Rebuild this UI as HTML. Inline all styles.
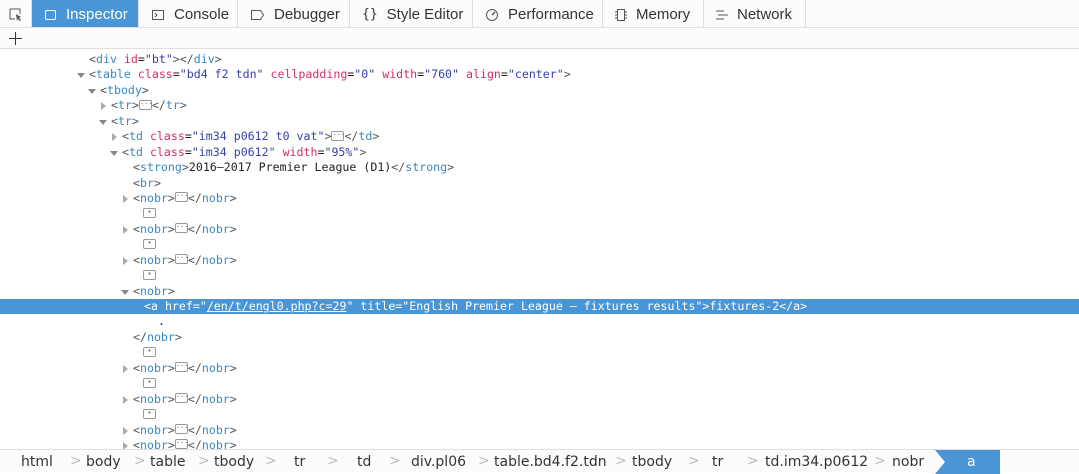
<!DOCTYPE html>
<html><head><style>
*{margin:0;padding:0;box-sizing:border-box}
body{width:1079px;height:473px;overflow:hidden;background:#fff;font-family:"Liberation Sans",sans-serif;position:relative}
.tabs{position:absolute;top:0;left:0;width:1079px;height:28px;background:#fcfcfc;border-bottom:1px solid #e0e0e0}
.tab{position:absolute;top:0;height:27px;display:flex;align-items:center;padding:2px 0 0 12px;font-size:15px;color:#333;border-right:1px solid #e0e0e0;gap:9px;white-space:nowrap;font-family:"Liberation Sans",sans-serif}
.tab svg,.tab span{flex-shrink:0}
.tab.sel{background:#4a95d6;color:#fff}
.tool{position:absolute;top:28px;left:0;width:1079px;height:21px;background:#fcfcfc;border-bottom:1px solid #e0e0e0}
.code{position:absolute;top:52px;left:0;width:1079px;font-family:"DejaVu Sans Mono","Liberation Mono",monospace;font-size:11.6px;color:#222}
.l{height:15.45px;line-height:15.45px;position:relative;white-space:pre}
.l.hi{background:#4a95d6;color:#fff}
.t{color:#3a88c0}.a{color:#d0306a}.v{color:#3640a8}.p{color:#555}
.hi .t,.hi .a,.hi .v,.hi .p{color:#fff}
.ar{position:absolute;width:0;height:0}
.dn{border-left:4px solid transparent;border-right:4px solid transparent;border-top:5px solid #888;top:6px}
.rt{border-top:4px solid transparent;border-bottom:4px solid transparent;border-left:5px solid #aaa;top:4px}
.b{display:inline-block;width:13px;height:10px;border:1px solid #999;border-radius:2px;vertical-align:middle;position:relative;top:-1px;font-size:7px;line-height:6px;text-align:center;color:#666}
.bc{position:absolute;top:449px;left:0;width:1079px;height:24px;background:#fcfcfc;border-top:1px solid #e0e0e0;font-family:"DejaVu Sans","Liberation Sans",sans-serif;font-size:14px;color:#333}
.bc span{position:absolute;top:4px}
.bc i{position:absolute;top:3px;color:#bbb;font-style:normal;font-size:14px}
</style></head><body>
<div class="tabs">
<div class="tab" style="left:0;width:32px;padding-left:9px"><svg width="13" height="13" viewBox="0 0 13 13"><path d="M1 1h10v5M1 1v10h5" fill="none" stroke="#555"/><path d="M7 6l5 3-2 1 2 2-1 1-2-2-1 2z" fill="#555"/></svg></div>
<div class="tab sel" style="left:32px;width:107px"><svg width="13" height="12"><rect x="1.5" y="1.5" width="10" height="9" rx="1.5" fill="none" stroke="#fff"/></svg>Inspector</div>
<div class="tab" style="left:139px;width:99px"><svg width="14" height="12"><rect x="1.5" y="1.5" width="11" height="9" fill="none" stroke="#555"/><path d="M4 4l2 2-2 2" fill="none" stroke="#555"/></svg>Console</div>
<div class="tab" style="left:238px;width:112px"><svg width="15" height="12"><path d="M1.5 1.5h9l3 4.5-3 4.5h-9z" fill="none" stroke="#555"/></svg>Debugger</div>
<div class="tab" style="left:350px;width:123px"><span style="font-size:13px;font-family:'DejaVu Sans Mono',monospace">{}</span>Style Editor</div>
<div class="tab" style="left:473px;width:130px"><svg width="14" height="14"><circle cx="7" cy="7" r="5.5" fill="none" stroke="#555"/><path d="M7 7l3-3" stroke="#555" stroke-width="1.5"/></svg>Performance</div>
<div class="tab" style="left:603px;width:101px"><svg width="12" height="14"><rect x="2.5" y="1.5" width="7" height="11" fill="none" stroke="#555"/><path d="M0 4h2M0 7h2M0 10h2M10 4h2M10 7h2M10 10h2" stroke="#555"/></svg>Memory</div>
<div class="tab" style="left:704px;width:102px"><svg width="12" height="12"><path d="M0 2h8M2 6h10M0 10h8" stroke="#555"/></svg>Network</div>
</div>
<div class="tool"><svg style="position:absolute;left:9px;top:4px" width="13" height="13"><path d="M6.5 0v13M0 6.5h13" stroke="#333"/></svg></div>
<div class="code">
<div class="l" style="padding-left:89px"><span class="p">&lt;</span><span class="t">div</span> <span class="a">id</span>=<span class="v">"bt"</span><span class="p">&gt;&lt;/</span><span class="t">div</span><span class="p">&gt;</span></div>
<div class="l" style="padding-left:89px"><i class="ar dn" style="left:77px"></i><span class="p">&lt;</span><span class="t">table</span> <span class="a">class</span>=<span class="v">"bd4 f2 tdn"</span> <span class="a">cellpadding</span>=<span class="v">"0"</span> <span class="a">width</span>=<span class="v">"760"</span> <span class="a">align</span>=<span class="v">"center"</span><span class="p">&gt;</span></div>
<div class="l" style="padding-left:100px"><i class="ar dn" style="left:88px"></i><span class="p">&lt;</span><span class="t">tbody</span><span class="p">&gt;</span></div>
<div class="l" style="padding-left:111px"><i class="ar rt" style="left:101px"></i><span class="p">&lt;</span><span class="t">tr</span><span class="p">&gt;</span><span class="b">···</span><span class="p">&lt;/</span><span class="t">tr</span><span class="p">&gt;</span></div>
<div class="l" style="padding-left:111px"><i class="ar dn" style="left:99px"></i><span class="p">&lt;</span><span class="t">tr</span><span class="p">&gt;</span></div>
<div class="l" style="padding-left:122px"><i class="ar rt" style="left:112px"></i><span class="p">&lt;</span><span class="t">td</span> <span class="a">class</span>=<span class="v">"im34 p0612 t0 vat"</span><span class="p">&gt;</span><span class="b">···</span><span class="p">&lt;/</span><span class="t">td</span><span class="p">&gt;</span></div>
<div class="l" style="padding-left:122px"><i class="ar dn" style="left:110px"></i><span class="p">&lt;</span><span class="t">td</span> <span class="a">class</span>=<span class="v">"im34 p0612"</span> <span class="a">width</span>=<span class="v">"95%"</span><span class="p">&gt;</span></div>
<div class="l" style="padding-left:133px"><span class="p">&lt;</span><span class="t">strong</span><span class="p">&gt;</span>2016–2017 Premier League (D1)<span class="p">&lt;/</span><span class="t">strong</span><span class="p">&gt;</span></div>
<div class="l" style="padding-left:133px"><span class="p">&lt;</span><span class="t">br</span><span class="p">&gt;</span></div>
<div class="l" style="padding-left:133px"><i class="ar rt" style="left:123px"></i><span class="p">&lt;</span><span class="t">nobr</span><span class="p">&gt;</span><span class="b">···</span><span class="p">&lt;/</span><span class="t">nobr</span><span class="p">&gt;</span></div>
<div class="l" style="padding-left:143px"><span class="b">•</span></div>
<div class="l" style="padding-left:133px"><i class="ar rt" style="left:123px"></i><span class="p">&lt;</span><span class="t">nobr</span><span class="p">&gt;</span><span class="b">···</span><span class="p">&lt;/</span><span class="t">nobr</span><span class="p">&gt;</span></div>
<div class="l" style="padding-left:143px"><span class="b">•</span></div>
<div class="l" style="padding-left:133px"><i class="ar rt" style="left:123px"></i><span class="p">&lt;</span><span class="t">nobr</span><span class="p">&gt;</span><span class="b">···</span><span class="p">&lt;/</span><span class="t">nobr</span><span class="p">&gt;</span></div>
<div class="l" style="padding-left:143px"><span class="b">•</span></div>
<div class="l" style="padding-left:133px"><i class="ar dn" style="left:121px"></i><span class="p">&lt;</span><span class="t">nobr</span><span class="p">&gt;</span></div>
<div class="l hi" style="padding-left:144px">&lt;a href="<u>/en/t/engl0.php?c=29</u>" title="English Premier League – fixtures results"&gt;fixtures-2&lt;/a&gt;</div>
<div class="l" style="padding-left:158px">.</div>
<div class="l" style="padding-left:133px"><span class="p">&lt;/</span><span class="t">nobr</span><span class="p">&gt;</span></div>
<div class="l" style="padding-left:143px"><span class="b">•</span></div>
<div class="l" style="padding-left:133px"><i class="ar rt" style="left:123px"></i><span class="p">&lt;</span><span class="t">nobr</span><span class="p">&gt;</span><span class="b">···</span><span class="p">&lt;/</span><span class="t">nobr</span><span class="p">&gt;</span></div>
<div class="l" style="padding-left:143px"><span class="b">•</span></div>
<div class="l" style="padding-left:133px"><i class="ar rt" style="left:123px"></i><span class="p">&lt;</span><span class="t">nobr</span><span class="p">&gt;</span><span class="b">···</span><span class="p">&lt;/</span><span class="t">nobr</span><span class="p">&gt;</span></div>
<div class="l" style="padding-left:143px"><span class="b">•</span></div>
<div class="l" style="padding-left:133px"><i class="ar rt" style="left:123px"></i><span class="p">&lt;</span><span class="t">nobr</span><span class="p">&gt;</span><span class="b">···</span><span class="p">&lt;/</span><span class="t">nobr</span><span class="p">&gt;</span></div>
<div class="l" style="padding-left:133px"><i class="ar rt" style="left:123px"></i><span class="p">&lt;</span><span class="t">nobr</span><span class="p">&gt;</span><span class="b">···</span><span class="p">&lt;/</span><span class="t">nobr</span><span class="p">&gt;</span></div>
</div>
<div class="bc">
<span style="left:21px">html</span><i style="left:70px">&gt;</i>
<span style="left:86px">body</span><i style="left:134px">&gt;</i>
<span style="left:150px">table</span><i style="left:198px">&gt;</i>
<span style="left:214px">tbody</span><i style="left:265px">&gt;</i>
<span style="left:294px">tr</span><i style="left:327px">&gt;</i>
<span style="left:357px">td</span><i style="left:389px">&gt;</i>
<span style="left:411px">div.pl06</span><i style="left:478px">&gt;</i>
<span style="left:494px">table.bd4.f2.tdn</span><i style="left:615px">&gt;</i>
<span style="left:632px">tbody</span><i style="left:688px">&gt;</i>
<span style="left:712px">tr</span><i style="left:747px">&gt;</i>
<span style="left:765px">td.im34.p0612</span><i style="left:874px">&gt;</i>
<span style="left:892px">nobr</span>
<div style="position:absolute;left:935px;top:0;width:65px;height:24px;background:#4a95d6;clip-path:polygon(0 0,100% 0,100% 100%,0 100%,10px 50%)"></div>
<span style="left:967px;color:#fff">a</span>
</div>
</body></html>
